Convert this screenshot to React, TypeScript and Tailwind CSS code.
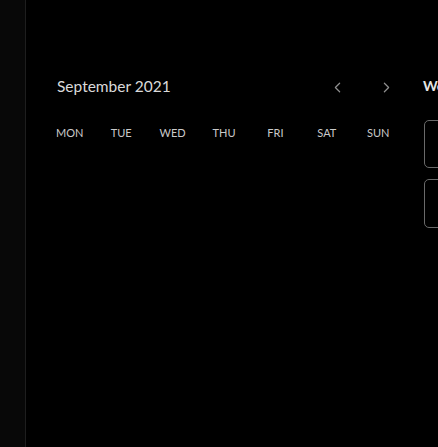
import { ChevronLeft, ChevronRight } from "lucide-react";

const days = ["MON", "TUE", "WED", "THU", "FRI", "SAT", "SUN"];

export default function App() {
  return (
    <div
      className="flex h-[447px] w-[438px] overflow-hidden bg-black"
      style={{ fontFamily: "Lato, 'Open Sans', sans-serif" }}
    >
      {/* side rail */}
      <div className="w-[26px] shrink-0 border-r border-[#1e1e1e] bg-[#080808]" />

      <div className="flex shrink-0 gap-[19px] pl-[18px] pt-[76px]">
        {/* calendar */}
        <div className="w-[360px] shrink-0">
          <div className="flex h-[22px] items-center justify-between px-[9px]">
            <span className="pl-[4px] text-[15.5px] text-[#dadada]">September 2021</span>
            <div className="flex items-center gap-[32px] text-[#909090]">
              <ChevronLeft size={17} strokeWidth={1.7} />
              <ChevronRight size={17} strokeWidth={1.7} />
            </div>
          </div>
          <div className="mt-[28px] grid grid-cols-7">
            {days.map((d) => (
              <div key={d} className="text-center text-[11px] leading-[14px] text-[#cacaca]">
                {d}
              </div>
            ))}
          </div>
        </div>

        {/* week panel */}
        <div className="w-[200px] shrink-0">
          <div className="h-[20px] text-[14px] font-bold leading-[20px] text-[#e6e6e6]">Week</div>
          <div className="mt-[24px] flex flex-col gap-[11px] pl-[1px]">
            <div className="h-[48px] rounded-[5px] border border-[#6a6a6a]" />
            <div className="h-[49px] rounded-[5px] border border-[#6a6a6a]" />
          </div>
        </div>
      </div>
    </div>
  );
}
